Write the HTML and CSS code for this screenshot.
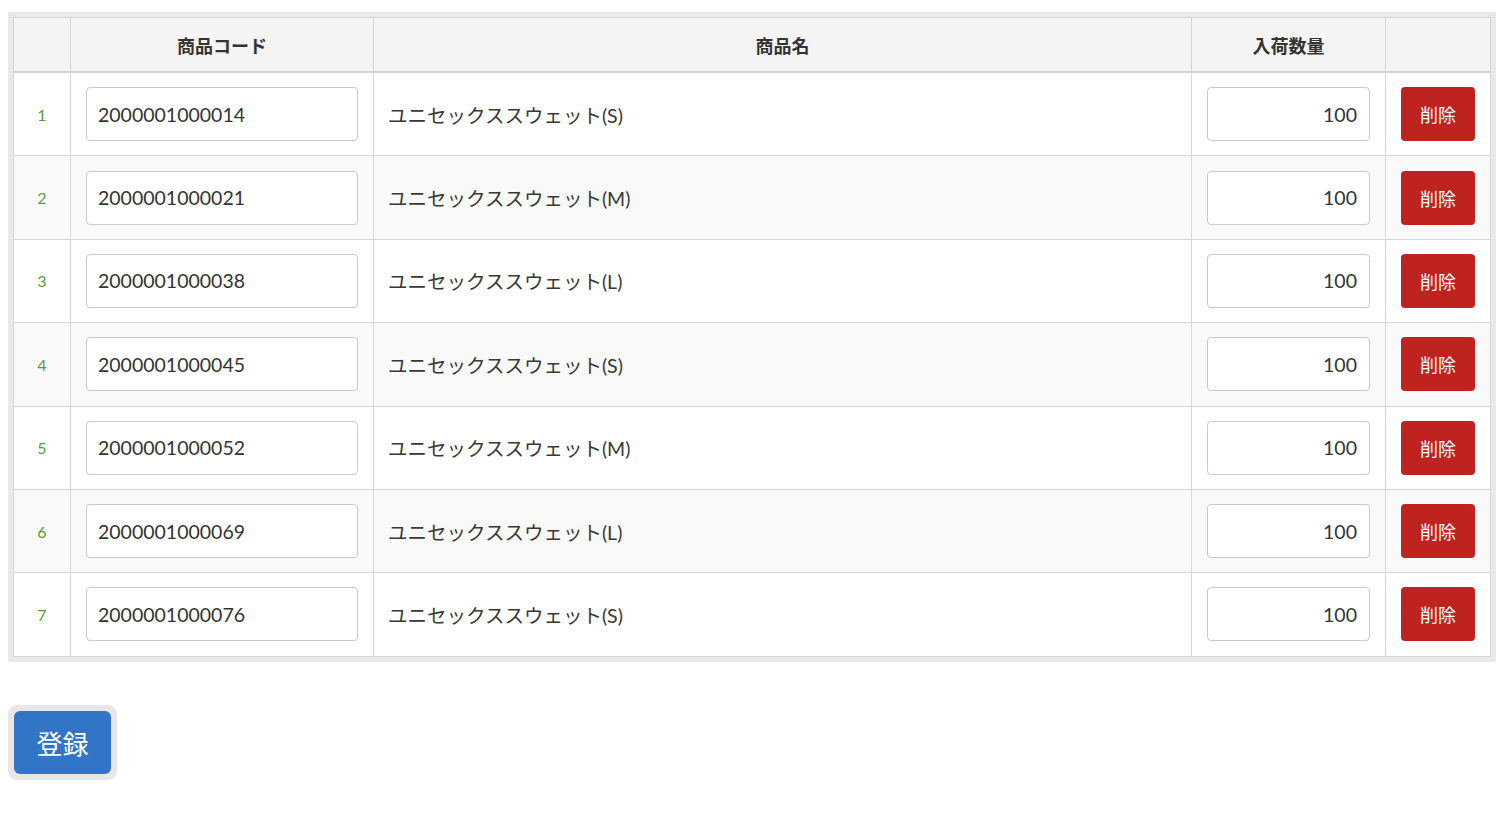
FILE: index.html
```html
<!DOCTYPE html>
<html lang="ja">
<head>
    <meta charset="UTF-8">
    <title>入荷登録</title>
    <link rel="stylesheet" href="styles.css">
</head>
<body>
    <div class="table-wrap">
        <table class="arrival">
            <thead>
                <tr>
                    <th class="col-no"></th>
                    <th class="col-code">商品コード</th>
                    <th class="col-name">商品名</th>
                    <th class="col-qty">入荷数量</th>
                    <th class="col-del"></th>
                </tr>
            </thead>
            <tbody>
                <tr>
                    <td class="no">1</td>
                    <td><input class="text-input" type="text" value="2000001000014"></td>
                    <td class="name">ユニセックススウェット(S)</td>
                    <td><input class="text-input num" type="text" value="100"></td>
                    <td><button class="btn-del">削除</button></td>
                </tr>
                <tr>
                    <td class="no">2</td>
                    <td><input class="text-input" type="text" value="2000001000021"></td>
                    <td class="name">ユニセックススウェット(M)</td>
                    <td><input class="text-input num" type="text" value="100"></td>
                    <td><button class="btn-del">削除</button></td>
                </tr>
                <tr>
                    <td class="no">3</td>
                    <td><input class="text-input" type="text" value="2000001000038"></td>
                    <td class="name">ユニセックススウェット(L)</td>
                    <td><input class="text-input num" type="text" value="100"></td>
                    <td><button class="btn-del">削除</button></td>
                </tr>
                <tr>
                    <td class="no">4</td>
                    <td><input class="text-input" type="text" value="2000001000045"></td>
                    <td class="name">ユニセックススウェット(S)</td>
                    <td><input class="text-input num" type="text" value="100"></td>
                    <td><button class="btn-del">削除</button></td>
                </tr>
                <tr>
                    <td class="no">5</td>
                    <td><input class="text-input" type="text" value="2000001000052"></td>
                    <td class="name">ユニセックススウェット(M)</td>
                    <td><input class="text-input num" type="text" value="100"></td>
                    <td><button class="btn-del">削除</button></td>
                </tr>
                <tr>
                    <td class="no">6</td>
                    <td><input class="text-input" type="text" value="2000001000069"></td>
                    <td class="name">ユニセックススウェット(L)</td>
                    <td><input class="text-input num" type="text" value="100"></td>
                    <td><button class="btn-del">削除</button></td>
                </tr>
                <tr>
                    <td class="no">7</td>
                    <td><input class="text-input" type="text" value="2000001000076"></td>
                    <td class="name">ユニセックススウェット(S)</td>
                    <td><input class="text-input num" type="text" value="100"></td>
                    <td><button class="btn-del">削除</button></td>
                </tr>
            </tbody>
        </table>
    </div>

    <div class="actions">
        <span class="btn-frame"><button class="btn-submit">登録</button></span>
    </div>
</body>
</html>
```

FILE: styles.css
```css
body{
    margin:0;
    padding:12px 4px 0 8px;
    font-family: Lato, "Noto Sans CJK JP", sans-serif;
    color:#333;
    background:#fff;
}

.table-wrap{
    border:5px solid #e9e9e9;
    border-radius:2px;
}
.arrival{
    width:100%;
    border-collapse: collapse;
    table-layout: fixed;
    border:1px solid #d4d4d4;
}
.arrival .col-no{ width:56px; }
.arrival .col-code{ width:302px; }
.arrival .col-qty{ width:193px; }
.arrival .col-del{ width:104px; }

.arrival th{
    height:53px;
    padding:0;
    background-color:#f4f4f4;
    border:1px solid #d4d4d4;
    border-bottom:2px solid #d4d4d4;
    font-size:18px;
    font-weight:bold;
    text-align:center;
    color:#333;
}
.arrival td{
    padding:14.2px 15px;
    border:1px solid #d6d6d6;
    font-size:19.5px;
    vertical-align: middle;
}
.arrival tbody tr:nth-child(even) td{
    background-color:#f9f9f9;
}
.arrival td.no{
    padding:0;
    text-align:center;
    font-size:16px;
    color:#5a9d33;
}
.arrival td.name{
    padding-left:14px;
    color:#383838;
}

.text-input{
    display:block;
    box-sizing: border-box;
    width:100%;
    height:54px;
    padding:0 11px;
    border:1px solid #c9c9c9;
    border-radius:4px;
    background:#fff;
    font-family: Lato, "Noto Sans CJK JP", sans-serif;
    font-size:19.5px;
    color:#333;
}
.text-input.num{
    padding-right:12px;
    text-align:right;
}

.btn-del{
    display:block;
    width:100%;
    height:54px;
    border:none;
    border-radius:4px;
    background-color:#bf2320;
    color:#fff;
    font-family: Lato, "Noto Sans CJK JP", sans-serif;
    font-size:18px;
    cursor:pointer;
}

.actions{
    padding-top:43px;
}
.btn-frame{
    display:inline-block;
    padding:6px;
    border-radius:9px;
    background-color:#e7e7e7;
}
.btn-submit{
    display:block;
    width:97px;
    height:63px;
    border:none;
    border-radius:6px;
    background-color:#3176c6;
    color:#fff;
    font-family: Lato, "Noto Sans CJK JP", sans-serif;
    font-size:26px;
    cursor:pointer;
}
```
